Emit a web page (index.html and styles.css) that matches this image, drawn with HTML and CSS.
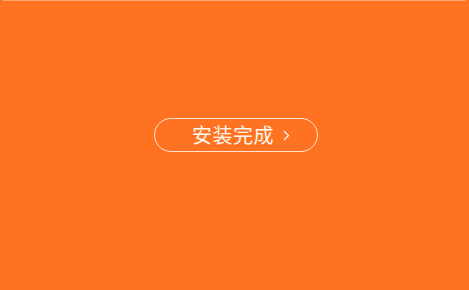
FILE: index.html
```html
<!DOCTYPE html>
<html lang="zh">
<head>
<meta charset="utf-8">
<link rel="stylesheet" href="styles.css">
</head>
<body>
<div class="screen">
  <div class="topline"></div>
  <div class="center">
    <button class="done-btn">
      <span class="label">安装完成</span>
      <svg class="chev" width="7" height="11" viewBox="0 0 7 11"><path d="M1 1 L5.5 5.5 L1 10" fill="none" stroke="#fff" stroke-width="1.2"/></svg>
    </button>
  </div>
</div>
</body>
</html>
```
FILE: styles.css
```css
html, body {
  margin: 0;
  padding: 0;
  width: 469px;
  height: 290px;
  overflow: hidden;
  background: #ff7221;
}
.screen {
  width: 469px;
  height: 290px;
  display: flex;
  flex-direction: column;
  background: #ff7221;
}
.topline {
  height: 1px;
  margin: 0 3px;
  background: #f8a575;
}
.center {
  display: flex;
  justify-content: center;
  padding-top: 117px;
  padding-left: 3px;
}
.done-btn {
  box-sizing: border-box;
  width: 164px;
  height: 34px;
  border: 1px solid #ffe4d2;
  border-radius: 17px;
  background: transparent;
  display: flex;
  align-items: center;
  padding: 0 0 0 37px;
  gap: 9px;
  font-family: "Noto Sans CJK SC", "Liberation Sans", sans-serif;
  font-size: 20px;
  font-weight: 400;
  color: #fff6ef;
  cursor: pointer;
}
.label {
  line-height: 1;
  letter-spacing: 0.5px;
}
.chev {
  display: block;
  margin-top: 1px;
}
```
